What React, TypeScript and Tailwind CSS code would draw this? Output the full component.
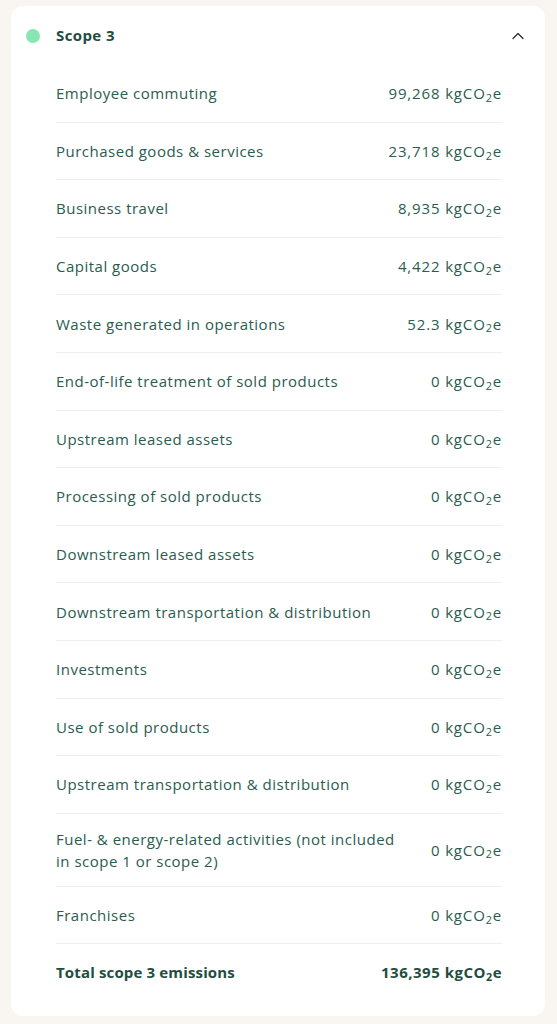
import { ChevronUp } from "lucide-react";

type Row = {
  label: string;
  value: string;
};

const rows: Row[] = [
  { label: "Employee commuting", value: "99,268" },
  { label: "Purchased goods & services", value: "23,718" },
  { label: "Business travel", value: "8,935" },
  { label: "Capital goods", value: "4,422" },
  { label: "Waste generated in operations", value: "52.3" },
  { label: "End-of-life treatment of sold products", value: "0" },
  { label: "Upstream leased assets", value: "0" },
  { label: "Processing of sold products", value: "0" },
  { label: "Downstream leased assets", value: "0" },
  { label: "Downstream transportation & distribution", value: "0" },
  { label: "Investments", value: "0" },
  { label: "Use of sold products", value: "0" },
  { label: "Upstream transportation & distribution", value: "0" },
  {
    label: "Fuel- & energy-related activities (not included in scope 1 or scope 2)",
    value: "0",
  },
  { label: "Franchises", value: "0" },
];

function Unit() {
  return (
    <>
      kgCO<sub className="text-[0.72em]">2</sub>e
    </>
  );
}

export default function App() {
  return (
    <main
      className="min-h-screen bg-[#f9f6f1] pt-[6px] pl-[11px] pr-[12px] pb-[8px]"
      style={{ fontFamily: "'Open Sans', Lato, sans-serif" }}
    >
      <section className="bg-white rounded-[12px] pb-[16px]">
        <div className="flex items-center h-[59px] pl-[15px] pr-[17px]">
          <span className="w-[14px] h-[14px] rounded-full bg-[#88e6b3]" />
          <h2 className="ml-[16px] text-[15px] tracking-[0.4px] font-bold text-[#1f4d41]">
            Scope 3
          </h2>
          <ChevronUp
            className="ml-auto text-[#2b2b2b]"
            size={20}
            strokeWidth={1.5}
          />
        </div>

        <div className="ml-[45px] mr-[43px]">
          {rows.map((row) => (
            <div
              key={row.label}
              className="flex items-center justify-between gap-6 min-h-[57.6px] py-[14px] border-b border-[#f1efeb] text-[15px] tracking-[0.5px] leading-[22px] text-[#2a5c4f]"
            >
              <p className="max-w-[352px]">{row.label}</p>
              <p className="whitespace-nowrap tracking-[0.85px]">
                {row.value} <Unit />
              </p>
            </div>
          ))}

          <div className="flex items-center justify-between min-h-[56px] text-[15px] leading-[22px] font-bold text-[#1f4d41]">
            <p className="tracking-[0.15px]">Total scope 3 emissions</p>
            <p className="whitespace-nowrap tracking-[0.5px]">
              136,395 <Unit />
            </p>
          </div>
        </div>
      </section>
    </main>
  );
}
